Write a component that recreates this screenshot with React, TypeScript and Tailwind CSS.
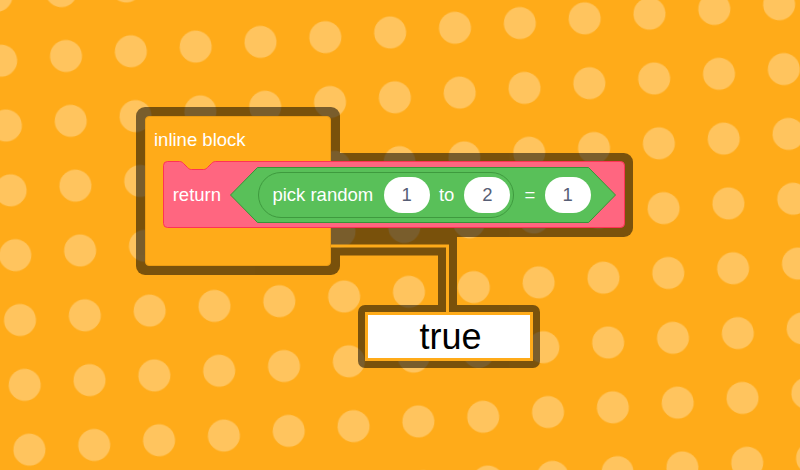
import type { ReactNode } from "react";

const ORANGE = "#FFAB19";

function Oval({ children }: { children: ReactNode }) {
  return (
    <div className="w-[46px] h-[36px] shrink-0 rounded-full bg-white flex items-center justify-center text-[#575E75]">
      {children}
    </div>
  );
}

function Backdrop() {
  // dotted canvas + dark halos behind the highlighted blocks
  return (
    <svg className="absolute inset-0" width="800" height="470">
      <defs>
        <pattern
          id="dots"
          width="65"
          height="65"
          patternUnits="userSpaceOnUse"
          patternTransform="rotate(-4.15) translate(29.28 28.13)"
        >
          <circle cx="32.5" cy="32.5" r="16" fill="#fff" fillOpacity="0.3" />
        </pattern>
      </defs>
      <rect width="800" height="470" fill={ORANGE} />
      <rect width="800" height="470" fill="url(#dots)" />
      <g opacity="0.52">
        <rect x="136" y="107" width="204" height="168" rx="9" fill="#000" />
        <rect x="154" y="153" width="479" height="84" rx="9" fill="#000" />
        <path d="M331 246 H447.5 V313" stroke="#000" strokeWidth="19" fill="none" />
        <rect x="358" y="305" width="182" height="63" rx="7" fill="#000" />
      </g>
      <path d="M331 246 H447.5 V313" stroke={ORANGE} strokeWidth="3" fill="none" />
    </svg>
  );
}

function ReturnBlock() {
  return (
    <div className="relative w-[462px] h-[67px] mt-[12.5px] ml-[17px] flex items-center">
      <svg className="absolute inset-0" width="462" height="67">
        <path
          d="M0.5 4.5 A4 4 0 0 1 4.5 0.5 H16.5 c2 0 3 1 4 2 l4 4 c1 1 2 2 4 2 h12 c2 0 3 -1 4 -2 l4 -4 c1 -1 2 -2 4 -2 H457.5 A4 4 0 0 1 461.5 4.5 V62.5 A4 4 0 0 1 457.5 66.5 H4.5 A4 4 0 0 1 0.5 62.5 Z"
          fill="#FF6680"
          stroke="#FF3355"
        />
      </svg>
      <span className="relative pl-[9.7px] w-[67px] pt-[1px]">return</span>
      {/* boolean: pick random 1 to 2 = 1 */}
      <div className="relative w-[386px] h-[56px] flex items-center pl-[28px]">
        <svg className="absolute inset-0" width="386" height="56">
          <polygon
            points="0.5,28 27.5,0.5 358.5,0.5 385.5,28 358.5,55.5 27.5,55.5"
            fill="#59C059"
            stroke="#389438"
          />
        </svg>
        <div className="relative h-[46px] rounded-full border border-[#3E9A3E] flex items-center pl-[13.4px] pr-[3px]">
          <span className="pt-[1px]">pick random</span>
          <div className="ml-[10.5px]">
            <Oval>1</Oval>
          </div>
          <span className="ml-[9.3px] pt-[1px]">to</span>
          <div className="ml-[10px]">
            <Oval>2</Oval>
          </div>
        </div>
        <span className="relative ml-[10px] pt-[1px]">=</span>
        <div className="relative ml-[9.5px]">
          <Oval>1</Oval>
        </div>
      </div>
    </div>
  );
}

export default function App() {
  return (
    <div className="relative w-[800px] h-[470px] overflow-hidden bg-[#FFAB19] font-['Liberation_Sans',Arial,sans-serif] text-[18.5px] leading-[18px] text-white">
      <Backdrop />

      <div className="absolute left-[145px] top-[116px] w-[186px] h-[150px] rounded-[4px] bg-[#FFAB19] border border-[#EC9C13]">
        <div className="ml-[8px] mt-[13.5px]">inline block</div>
        <ReturnBlock />
      </div>

      <div className="absolute left-[365px] top-[312px] w-[168px] h-[49px] border-[3px] border-[#FFAB19] bg-white flex items-center justify-center pl-[3px] text-[36px] leading-[36px] text-black">
        true
      </div>
    </div>
  );
}
